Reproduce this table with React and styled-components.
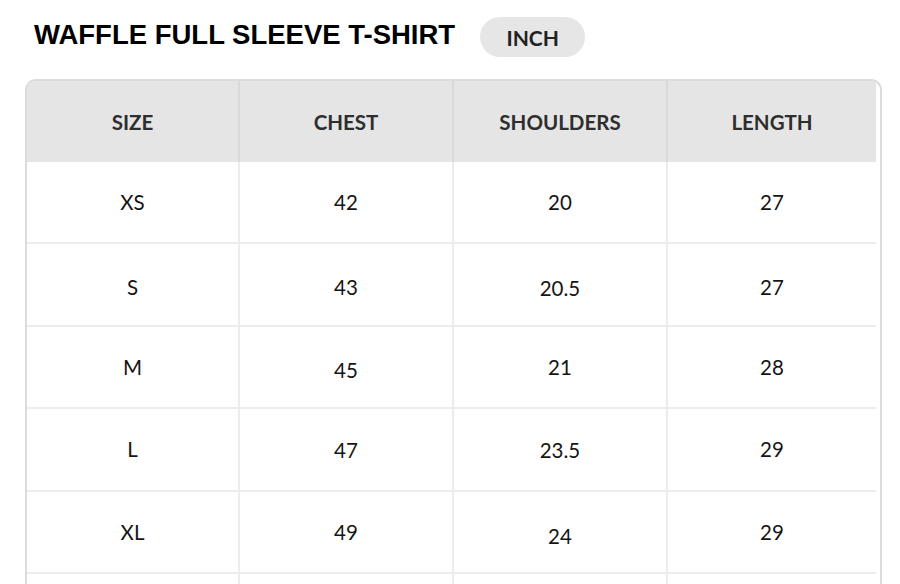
import styled, { createGlobalStyle } from "styled-components";

const GlobalStyle = createGlobalStyle`
  html, body {
    margin: 0;
    padding: 0;
    background: #fff;
  }
  body {
    font-family: "Lato", "Open Sans", sans-serif;
    overflow: hidden;
  }
`;

const Page = styled.div`
  width: 900px;
  height: 584px;
  overflow: hidden;
  padding: 16px 0 0 25px;
  box-sizing: border-box;
`;

const TitleBar = styled.div`
  display: flex;
  align-items: center;
  gap: 25px;
  padding-left: 9px;
  height: 41px;
`;

const Title = styled.h1`
  margin: 0;
  font-family: "Liberation Sans", Arial, sans-serif;
  font-weight: 700;
  font-size: 27.5px;
  color: #000;
  position: relative;
  top: -2px;
`;

const UnitPill = styled.div`
  width: 105px;
  height: 40px;
  border-radius: 20px;
  background: #e6e6e6;
  display: flex;
  align-items: center;
  justify-content: center;
  font-family: "Lato", sans-serif;
  font-size: 21px;
  font-weight: 700;
  color: #222;
  padding-top: 2px;
  box-sizing: border-box;
`;

const Table = styled.div`
  margin-top: 22px;
  width: 853px;
  border: 2px solid #dcdcdc;
  border-bottom: none;
  border-radius: 11px 11px 0 0;
  overflow: hidden;
  display: grid;
  grid-template-columns: 211px 214px 214px 210px;
`;

const HeadCell = styled.div`
  height: 81px;
  background: #e5e5e5;
  display: flex;
  align-items: center;
  justify-content: center;
  font-family: "Lato", sans-serif;
  font-size: 20.5px;
  font-weight: 700;
  color: #2e2e2e;
  border-left: ${(p) => (p.$first ? "none" : "2px solid #dadada")};
  box-sizing: border-box;
`;

const Cell = styled.div`
  height: 82.4px;
  display: flex;
  align-items: center;
  justify-content: center;
  font-family: "Lato", sans-serif;
  font-size: 20.5px;
  color: #151515;
  border-left: ${(p) => (p.$first ? "none" : "2px solid #ececec")};
  border-bottom: 2px solid #ececec;
  box-sizing: border-box;
  padding-top: ${(p) => p.$nudge * 2}px;
`;

const columns = ["SIZE", "CHEST", "SHOULDERS", "LENGTH"];

// [value, vertical nudge]; the last row is cut off by the window
const rows = [
  [["XS", -1], ["42", -1], ["20", -1], ["27", -1]],
  [["S", 2], ["43", 2], ["20.5", 3], ["27", 2]],
  [["M", -3], ["45", 3], ["21", -3], ["28", -3]],
  [["L", -2], ["47", 1], ["23.5", 1], ["29", -2]],
  [["XL", -2], ["49", -2], ["24", 4], ["29", -2]],
  [["", 0], ["", 0], ["", 0], ["", 0]],
];

export default function App() {
  return (
    <>
      <GlobalStyle />
      <Page>
        <TitleBar>
          <Title>WAFFLE FULL SLEEVE T-SHIRT</Title>
          <UnitPill>INCH</UnitPill>
        </TitleBar>
        <Table>
          {columns.map((c, i) => (
            <HeadCell key={c} $first={i === 0}>
              {c}
            </HeadCell>
          ))}
          {rows.map((row, r) =>
            row.map(([v, n], i) => (
              <Cell key={r + "-" + i} $first={i === 0} $nudge={n}>
                {v}
              </Cell>
            ))
          )}
        </Table>
      </Page>
    </>
  );
}
